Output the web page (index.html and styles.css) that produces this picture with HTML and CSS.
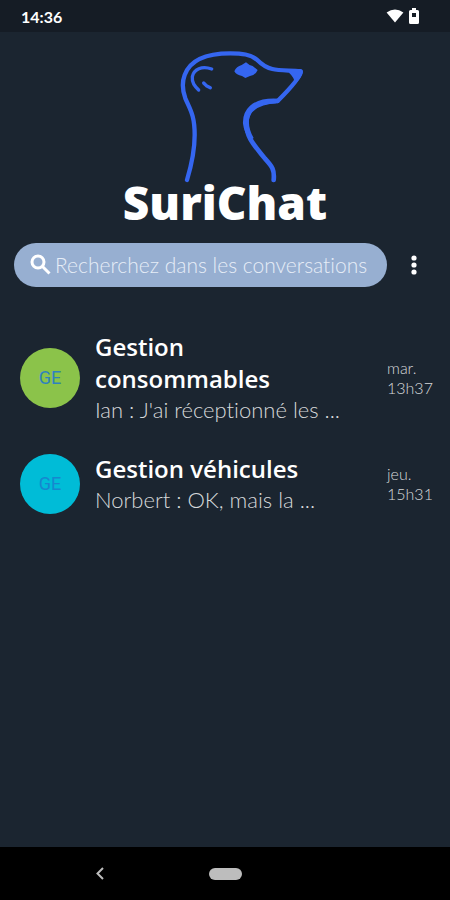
FILE: index.html
```html
<!DOCTYPE html>
<html lang="fr">
<head>
<meta charset="utf-8">
<meta name="viewport" content="width=device-width, initial-scale=1">
<title>SuriChat</title>
<link rel="stylesheet" href="styles.css">
</head>
<body>
<div class="status">
  <span>14:36</span>
  <span class="status-icons">
    <svg width="18" height="14" viewBox="0 0 18 14" aria-hidden="true"><path d="M9 13.6 0.6 3.5Q9-2.7 17.4 3.5Z"/></svg>
    <svg width="10" height="16" viewBox="0 0 10 16" aria-hidden="true"><path fill-rule="evenodd" d="M3 0h4v2h1.500Q10 2 10 3.500v11Q10 16 8.500 16h-7Q0 16 0 14.500v-11Q0 2 1.500 2H3ZM3 5v4h4V5Z"/></svg>
  </span>
</div>
<header class="brand">
  <svg class="logo" width="160" height="150" viewBox="0 0 480 450" aria-hidden="true">
    <g fill="none" stroke="#3566f0" stroke-linecap="round" stroke-linejoin="round">
      <path stroke-width="13" d="M81 420C96 370 104 335 104 285C104 225 90 208 76 175C67 150 66 126 74 105C88 66 132 40 211 40C247 40 270 43 291 59C307 75 319 83 337 87C358 92 387 91 422 94C423 106 401 135 353 183"/>
      <path stroke-width="14" d="M352 183C290 187 261 207 259 245C257 292 285 318 315 356C337 380 344 389 341 420"/>
      <path stroke-width="10" d="M155 87C126 76 101 88 97 110C95 128 104 138 116 150M131 129 139 137 151 143"/>
    </g>
    <g fill="#3566f0">
      <path d="M387 88 422 87Q429 89 429 96Q425 114 405 132Q404 113 387 98Z"/>
      <path d="M223 94Q229 79 245 75L258 67Q267 76 278 78L293 90Q286 106 270 108L256 114L246 108Q229 105 223 94Z"/>
      <path d="M353 176Q298 173 270 197Q247 218 249 251Q252 278 272 301L281 294Q265 266 267 240Q272 191 349 190Z"/>
    </g>
  </svg>
  <h1>SuriChat</h1>
</header>
<main>
  <div class="tools">
    <label class="search">
      <svg width="22" height="22" viewBox="0 0 22 22" aria-hidden="true"><circle cx="8" cy="8" r="6"/><path d="m12.500 12.500 7 7"/></svg>
      <input type="text" placeholder="Recherchez dans les conversations" aria-label="Recherchez dans les conversations">
    </label>
    <button class="more" type="button" aria-label="Menu"><svg width="6" height="20" viewBox="0 0 6 20" aria-hidden="true"><circle cx="3" cy="3" r="2.600"/><circle cx="3" cy="10" r="2.600"/><circle cx="3" cy="17" r="2.600"/></svg></button>
  </div>
  <ul class="chats">
    <li class="chat">
      <span class="avatar green">GE</span>
      <div class="text"><h2>Gestion consommables</h2><p>Ian : J'ai réceptionné les ...</p></div>
      <time>mar.<br>13h37</time>
    </li>
    <li class="chat">
      <span class="avatar cyan">GE</span>
      <div class="text"><h2>Gestion véhicules</h2><p>Norbert : OK, mais la ...</p></div>
      <time>jeu.<br>15h31</time>
    </li>
  </ul>
</main>
<nav class="system">
  <button type="button" aria-label="Retour"><svg width="8" height="13" viewBox="0 0 8 13" aria-hidden="true"><path d="M7 1 1.500 6.500 7 12"/></svg></button>
  <button class="home" type="button" aria-label="Accueil"></button>
</nav>
</body>
</html>
```
FILE: styles.css
```css
* {
  box-sizing: border-box;
}

body {
  margin: 0;
  min-height: 100vh;
  display: flex;
  flex-direction: column;
  background: #1b2530;
  color: #fff;
  font-family: Lato, sans-serif;
  font-variant-ligatures: none;
}

h1, h2, p, ul {
  margin: 0;
  padding: 0;
}

h1, h2 {
  font-family: "Open Sans", sans-serif;
}

button {
  border: 0;
  padding: 0;
  background: none;
}

svg {
  display: block;
}

.status {
  display: flex;
  justify-content: space-between;
  align-items: center;
  height: 32px;
  padding: 0 31px 0 21px;
  background: #151c25;
  font-size: 16px;
  font-weight: 700;
}

.status-icons {
  display: flex;
  align-items: center;
  gap: 5px;
  fill: #fff;
}

.brand {
  display: flex;
  flex-direction: column;
  align-items: center;
  padding-top: 8px;
}

.logo {
  margin-left: 30px;
}

h1 {
  margin-top: -16px;
  font-size: 46px;
  font-weight: 800;
  line-height: 56px;
}

main {
  flex: 1;
}

.tools {
  display: flex;
  align-items: center;
  padding: 13px 16px 0 14px;
}

.search {
  flex: 1;
  min-width: 0;
  display: flex;
  align-items: center;
  gap: 3px;
  height: 44px;
  padding: 0 12px 0 16px;
  border-radius: 22px;
  background: #97afd1;
}

.search svg {
  flex: none;
  fill: none;
  stroke: #fff;
  stroke-width: 3;
}

.search input {
  flex: 1;
  min-width: 0;
  height: 28px;
  padding: 0 0 2px;
  border: 0;
  outline: 0;
  background: none;
  color: #fff;
  font-family: Lato, sans-serif;
  font-size: 21px;
  font-weight: 300;
  font-variant-ligatures: none;
}

.search input::placeholder {
  color: #e6edf7;
  opacity: 1;
}

.more {
  display: flex;
  justify-content: center;
  flex: none;
  width: 40px;
  margin-left: 7px;
  fill: #fff;
}

.chats {
  display: flex;
  flex-direction: column;
  gap: 28px;
  padding: 44px 16px 0 20px;
  list-style: none;
}

.chat {
  display: flex;
  align-items: center;
}

.avatar {
  flex: none;
  width: 60px;
  height: 60px;
  border-radius: 50%;
  text-align: center;
  font: 400 18px/60px Roboto, sans-serif;
  color: #2f82bd;
}

.green {
  background: #8bc34a;
}

.cyan {
  background: #00bcd7;
  color: #1687cf;
}

.text {
  flex: 1;
  min-width: 0;
  padding: 0 40px 0 15px;
}

h2 {
  font-size: 24px;
  font-weight: 600;
  line-height: 32px;
}

.text p {
  font-size: 22px;
  font-weight: 300;
  line-height: 30px;
  color: #d6d8da;
  white-space: nowrap;
}

time {
  flex: none;
  width: 47px;
  font-size: 16px;
  font-weight: 300;
  line-height: 20px;
  color: #d6d8da;
}

.system {
  display: grid;
  grid-template-columns: 1fr 33px 1fr;
  align-items: center;
  height: 53px;
  background: #000;
}

.system button {
  justify-self: center;
  margin-right: 8px;
}

.system svg {
  fill: none;
  stroke: #bdbdbd;
  stroke-width: 2;
}

.system .home {
  width: 33px;
  height: 12px;
  margin: 0;
  border-radius: 6px;
  background: #bdbdbd;
}
```
